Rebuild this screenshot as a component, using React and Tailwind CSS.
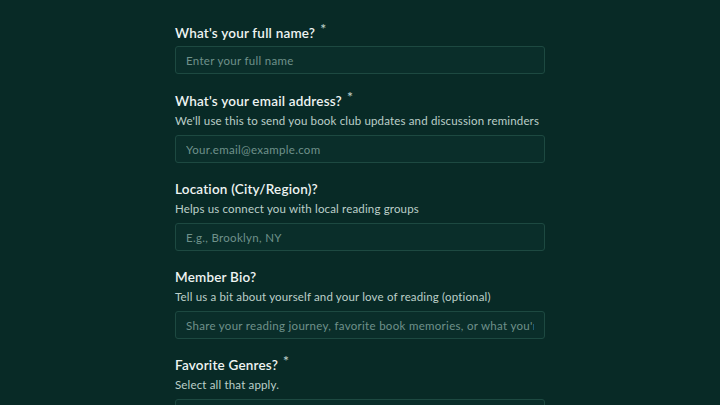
import React from 'react';

const Req = () => (
  <span className="ml-[5px] relative -top-[4px] text-[14px] text-[#b9ccc6]">*</span>
);

const labelCls =
  'pt-[2px] text-[13.5px] leading-[18px] font-semibold tracking-[0.2px] text-[#eef4f2]';
const hintCls =
  'mt-[3px] whitespace-nowrap text-[11.5px] leading-[16px] tracking-[0.16px] text-[#bccfc9]';
const boxCls = 'w-full rounded-[3px] border border-[#1d4941] bg-[#0a2e2a]';

const Field = ({ label, required, hint, placeholder, className = '' }) => (
  <div className={'flex flex-col ' + className}>
    <label className={labelCls}>
      {label}
      {required && <Req />}
    </label>
    {hint && <p className={hintCls}>{hint}</p>}
    <input
      className={
        boxCls +
        ' h-[28px] px-[10px] text-[11.5px] tracking-[0.3px] text-[#e6eeec] placeholder:text-[#6f918a] outline-none ' +
        (hint ? 'mt-[6px]' : 'mt-[4px]')
      }
      placeholder={placeholder}
    />
  </div>
);

const App = () => {
  return (
    <div
      className="min-h-[405px] h-[405px] overflow-hidden bg-[#082a26]"
      style={{ fontFamily: 'Lato, "Noto Sans", sans-serif' }}
    >
      <div className="mx-auto w-[370px] pt-[22px] flex flex-col gap-[15px]">
        <Field
          className="mb-[1px]"
          label="What's your full name?"
          required
          placeholder="Enter your full name"
        />
        <Field
          label="What's your email address?"
          required
          hint="We'll use this to send you book club updates and discussion reminders"
          placeholder="Your.email@example.com"
        />
        <Field
          label="Location (City/Region)?"
          hint="Helps us connect you with local reading groups"
          placeholder="E.g., Brooklyn, NY"
        />
        <Field
          label="Member Bio?"
          hint="Tell us a bit about yourself and your love of reading (optional)"
          placeholder="Share your reading journey, favorite book memories, or what you're looking for in a book club"
        />
        <div className="flex flex-col">
          <label className={labelCls}>
            Favorite Genres?
            <Req />
          </label>
          <p className={hintCls}>Select all that apply.</p>
          <div className={boxCls + ' mt-[6px] h-[60px]'} />
        </div>
      </div>
    </div>
  );
};

export default App;
